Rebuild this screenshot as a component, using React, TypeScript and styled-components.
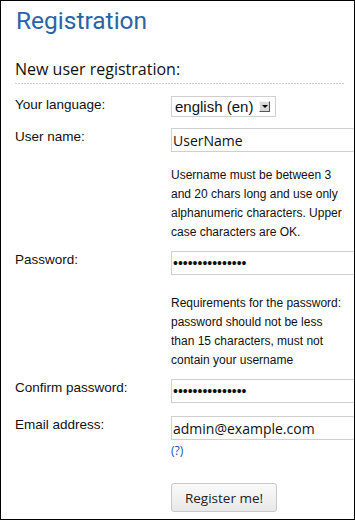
import React from 'react';
import styled, { createGlobalStyle } from 'styled-components';

const GlobalStyle = createGlobalStyle`
  html, body {
    margin: 0;
    padding: 0;
    background: #fff;
  }
`;

const Frame = styled.div`
  box-sizing: border-box;
  width: 355px;
  height: 520px;
  border: 1px solid #000;
  overflow: hidden;
  padding: 0 0 0 14px;
  font-family: 'Liberation Sans', Arial, sans-serif;
  color: #111;
`;

const Title = styled.h1`
  margin: 4px 0 0 1px;
  font-family: Roboto, 'Open Sans', sans-serif;
  font-weight: 400;
  font-size: 24.5px;
  line-height: 32px;
  color: #2a64a6;
`;

const SubTitle = styled.h2`
  position: relative;
  margin: 21px 10px 0 0;
  padding-bottom: 4px;
  font-family: 'Open Sans', 'Noto Sans', sans-serif;
  font-weight: 400;
  font-size: 16px;
  line-height: 22px;
  color: #111;
  &::after {
    content: '';
    position: absolute;
    left: 0;
    right: 0;
    bottom: 0;
    height: 1px;
    background: repeating-linear-gradient(to right, #cfcfcf 0 2px, transparent 2px 3px);
  }
`;

const Form = styled.form`
  display: flex;
  flex-direction: column;
  margin-top: 12px;
`;

const Row = styled.div<{ $gap?: number }>`
  display: flex;
  margin-top: ${(p) => p.$gap ?? 0}px;
`;

const Label = styled.label`
  flex: 0 0 156px;
  font-size: 13.5px;
  line-height: 16px;
  padding-top: 1px;
`;

const Field = styled.div`
  flex: 1;
  min-width: 0;
`;

const Select = styled.div`
  display: inline-flex;
  align-items: center;
  box-sizing: border-box;
  height: 21px;
  width: 105px;
  border: 1px solid #cfcfcf;
  padding-left: 3px;
  font-family: 'Liberation Sans', Arial, sans-serif;
  font-size: 15px;
  color: #111;
`;

const SelectText = styled.span`
  flex: 1;
`;

const SelectArrow = styled.span`
  box-sizing: border-box;
  width: 11px;
  height: 11px;
  margin-right: 5px;
  border: 1px solid #f4f4f4;
  border-right-color: #555;
  border-bottom-color: #555;
  background: #d8d8d8;
  display: flex;
  align-items: center;
  justify-content: center;
  &::after {
    content: '';
    border-left: 3px solid transparent;
    border-right: 3px solid transparent;
    border-top: 3px solid #000;
  }
`;

const Input = styled.input<{ $secret?: boolean }>`
  box-sizing: border-box;
  width: 200px;
  height: 24px;
  border: 1px solid #cfcfcf;
  padding: 0 1px;
  font-family: ${(p) =>
    p.$secret ? "'Liberation Sans', Arial, sans-serif" : "'Open Sans', 'Noto Sans', sans-serif"};
  font-size: 14px;
  color: #111;
  outline: none;
`;

const Help = styled.p<{ $gap: number }>`
  margin: ${(p) => p.$gap}px 0 0 0;
  max-width: 172px;
  font-size: 12px;
  line-height: 19px;
  color: #111;
`;

const HelpLink = styled.a`
  display: block;
  margin-top: 3px;
  font-family: 'Open Sans', 'Noto Sans', sans-serif;
  font-size: 12px;
  line-height: 16px;
  color: #2255aa;
  text-decoration: none;
`;

const Button = styled.button`
  box-sizing: border-box;
  width: 106px;
  height: 29px;
  padding: 0;
  border: 1px solid #c8c8c8;
  border-radius: 3px;
  background: linear-gradient(#fafafa, #e8e8e8);
  font-family: 'Open Sans', 'Noto Sans', sans-serif;
  font-size: 13.5px;
  color: #222;
`;

export default function App() {
  return (
    <>
      <GlobalStyle />
      <Frame>
        <Title>Registration</Title>
        <SubTitle>New user registration:</SubTitle>
        <Form>
          <Row>
            <Label>Your language:</Label>
            <Field>
              <Select>
                <SelectText>english (en)</SelectText>
                <SelectArrow />
              </Select>
            </Field>
          </Row>

          <Row $gap={11}>
            <Label>User name:</Label>
            <Field>
              <Input defaultValue="UserName" />
              <Help $gap={14}>
                Username must be between 3 and 20 chars long and use only alphanumeric
                characters. Upper case characters are OK.
              </Help>
            </Field>
          </Row>

          <Row $gap={9}>
            <Label>Password:</Label>
            <Field>
              <Input $secret type="password" defaultValue="passwordpasswor" />
              <Help $gap={19}>
                Requirements for the password: password should not be less than 15
                characters, must not contain your username
              </Help>
            </Field>
          </Row>

          <Row $gap={9}>
            <Label>Confirm password:</Label>
            <Field>
              <Input $secret type="password" defaultValue="passwordpasswor" />
            </Field>
          </Row>

          <Row $gap={13}>
            <Label>Email address:</Label>
            <Field>
              <Input defaultValue="admin@example.com" />
              <HelpLink href="#">(?)</HelpLink>
            </Field>
          </Row>

          <Row $gap={24}>
            <Label as="span" />
            <Field>
              <Button type="button">Register me!</Button>
            </Field>
          </Row>
        </Form>
      </Frame>
    </>
  );
}
